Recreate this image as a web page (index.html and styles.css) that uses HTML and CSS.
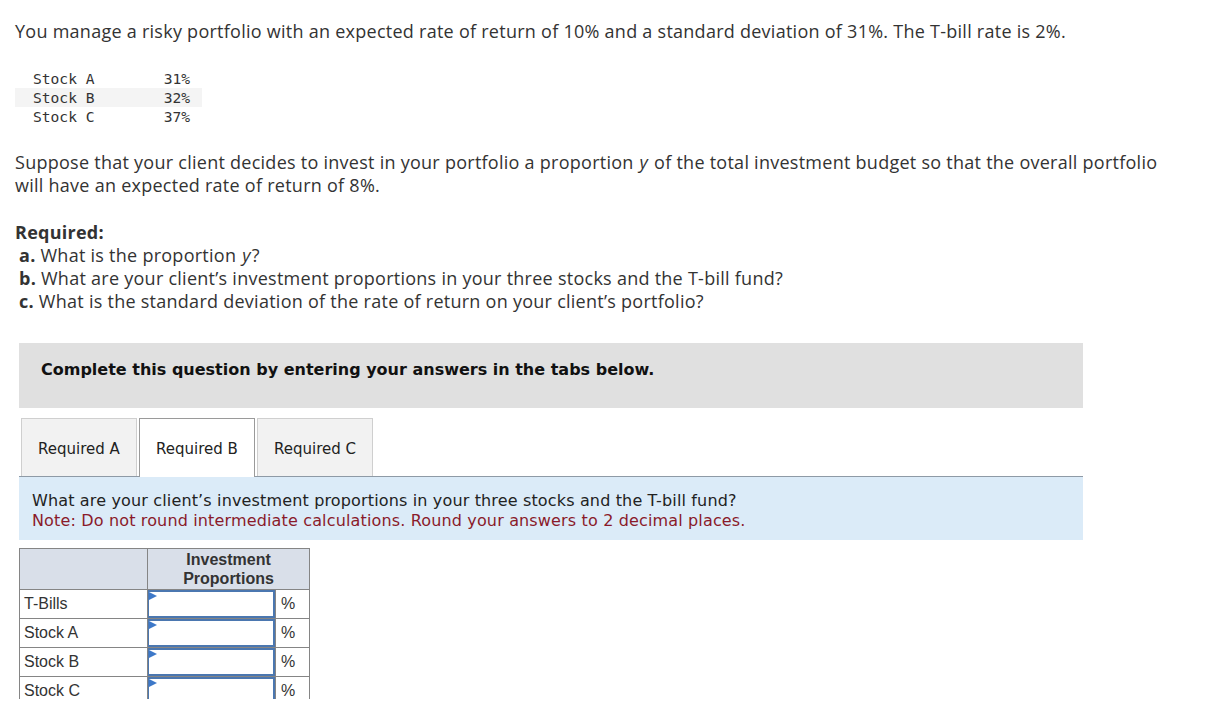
FILE: index.html
```html
<!DOCTYPE html>
<html>
<head>
<meta charset="utf-8">
<link rel="stylesheet" href="styles.css">
</head>
<body>
<div class="page">
  <p class="intro">You manage a risky portfolio with an expected rate of return of 10% and a standard deviation of 31%. The T-bill rate is 2%.</p>

  <table class="stocks">
    <tr><td class="sname">Stock A</td><td class="sval">31%</td></tr>
    <tr class="stripe"><td class="sname">Stock B</td><td class="sval">32%</td></tr>
    <tr><td class="sname">Stock C</td><td class="sval">37%</td></tr>
  </table>

  <p class="para">Suppose that your client decides to invest in your portfolio a proportion <i class="var">y</i> of the total investment budget so that the overall portfolio will have an expected rate of return of 8%.</p>

  <div class="required">
    <div class="req-title">Required:</div>
    <div class="req-item"><b>a.</b> What is the proportion <i class="var">y</i>?</div>
    <div class="req-item"><b>b.</b> What are your client’s investment proportions in your three stocks and the T-bill fund?</div>
    <div class="req-item"><b>c.</b> What is the standard deviation of the rate of return on your client’s portfolio?</div>
  </div>

  <div class="panel">
    <div class="complete">Complete this question by entering your answers in the tabs below.</div>

    <div class="tabs">
      <div class="tab">Required A</div>
      <div class="tab active">Required B</div>
      <div class="tab">Required C</div>
    </div>

    <div class="prompt">
      <div>What are your client’s investment proportions in your three stocks and the T-bill fund?</div>
      <div class="note">Note: Do not round intermediate calculations. Round your answers to 2 decimal places.</div>
    </div>

    <table class="answers">
      <tr class="head">
        <th class="blank"></th>
        <th colspan="2" class="colhead">Investment<br>Proportions</th>
      </tr>
      <tr><td class="label">T-Bills</td><td class="inp"><div class="field"></div></td><td class="pct">%</td></tr>
      <tr><td class="label">Stock A</td><td class="inp"><div class="field"></div></td><td class="pct">%</td></tr>
      <tr><td class="label">Stock B</td><td class="inp"><div class="field"></div></td><td class="pct">%</td></tr>
      <tr><td class="label">Stock C</td><td class="inp"><div class="field"></div></td><td class="pct">%</td></tr>
    </table>
  </div>
</div>
</body>
</html>
```

FILE: styles.css
```css
html, body {
  margin: 0;
  padding: 0;
  background: #fff;
}

.page {
  box-sizing: border-box;
  height: 699px;
  overflow: hidden;
  padding: 20px 0 0 15px;
  font-family: "Open Sans", "Liberation Sans", sans-serif;
  font-size: 18px;
  letter-spacing: 0.26px;
  color: #333;
}

.intro {
  margin: 0;
  line-height: 23px;
}

.var {
  padding: 0 1px;
}

.stocks {
  border-collapse: collapse;
  margin-top: 26px;
  width: 187px;
  font-family: "DejaVu Sans Mono", monospace;
  font-size: 14.6px;
  letter-spacing: 0;
  color: #333;
}

.stocks td {
  height: 19px;
  padding: 0;
  line-height: 19px;
}

.stocks .sname {
  padding-left: 18px;
  width: 112px;
}

.stocks .sval {
  text-align: right;
  padding-right: 12px;
}

.stocks .stripe td {
  background: #f4f4f4;
}

.para {
  margin: 25px 0 0;
  line-height: 23px;
  max-width: 1160px;
}

.required {
  margin-top: 24px;
  line-height: 23px;
}

.req-title {
  font-weight: bold;
}

.req-item {
  padding-left: 4px;
}

.panel {
  margin: 30px 0 0 4px;
  width: 1064px;
  font-family: "DejaVu Sans", Verdana, sans-serif;
  letter-spacing: 0;
}

.complete {
  background: #e0e0e0;
  padding: 17px 22px 28px;
  font-size: 16px;
  line-height: 20px;
  font-weight: bold;
  color: #111;
}

.tabs {
  margin-top: 10px;
  display: flex;
  gap: 2px;
  padding-left: 2px;
  border-bottom: 1px solid #8e9aa6;
  height: 58px;
}

.tab {
  box-sizing: border-box;
  width: 116px;
  height: 58px;
  padding-top: 2px;
  display: flex;
  align-items: center;
  justify-content: center;
  background: #f2f2f2;
  border: 1px solid #cfcfcf;
  border-bottom: none;
  font-size: 15px;
  color: #222;
}

.tab.active {
  background: #fff;
  border-color: #9a9a9a;
  height: 59px;
  margin-bottom: -1px;
}

.prompt {
  background: #dbebf8;
  padding: 14px 13px 9px;
  font-size: 16px;
  line-height: 20px;
  letter-spacing: 0.15px;
  color: #222;
}

.note {
  color: #8a1a2a;
}

.answers {
  margin-top: 8px;
  border-collapse: collapse;
  font-family: "Liberation Sans", Arial, sans-serif;
  font-size: 16px;
  color: #333;
}

.answers td, .answers th {
  border: 1px solid #858585;
  padding: 0;
}

.answers .head th {
  background: #d9dfe9;
  height: 40px;
}

.answers .blank {
  width: 127px;
}

.answers .colhead {
  font-weight: bold;
  line-height: 19px;
  text-align: center;
}

.answers td {
  height: 28px;
}

.answers .label {
  padding-left: 4px;
}

.answers .inp {
  width: 127px;
  position: relative;
}

.field {
  position: absolute;
  left: 0;
  top: 0;
  right: 0;
  bottom: 0;
  border: 2px solid #4b77b0;
  border-left-width: 1px;
  background: #fff;
}

.field::before {
  content: "";
  position: absolute;
  left: 0;
  top: 0;
  border-left: 8px solid #3d78c8;
  border-top: 4px solid transparent;
  border-bottom: 4px solid transparent;
}

.answers .pct {
  width: 28px;
  padding-left: 5px;
}
```
